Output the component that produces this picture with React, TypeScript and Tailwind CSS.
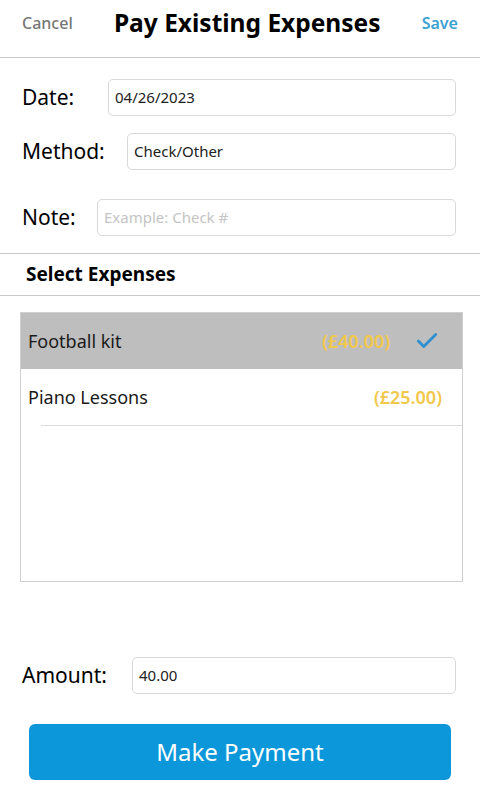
import { Check } from "lucide-react";

const font = { fontFamily: "'Noto Sans', Lato, sans-serif" };

const Field = ({
  label,
  value,
  placeholder,
  gap,
}: {
  label: string;
  value?: string;
  placeholder?: string;
  gap: string;
}) => (
  <div className="flex items-center">
    <span className={`text-[21px] text-black ${gap}`}>{label}</span>
    <div className="flex-1 h-[37px] border border-[#d9d9d9] rounded-[5px] flex items-center px-[6px]">
      {value ? (
        <span className="text-[15px] text-[#222]">{value}</span>
      ) : (
        <span className="text-[15px] text-[#c4c4c4]">{placeholder}</span>
      )}
    </div>
  </div>
);

export default function App() {
  const expenses = [
    { name: "Football kit", amount: "(£40.00)", selected: true },
    { name: "Piano Lessons", amount: "(£25.00)", selected: false },
  ];

  return (
    <div className="w-[480px] h-[801px] bg-white overflow-hidden" style={font}>
      {/* Header */}
      <div className="h-[58px] flex items-start justify-between pt-[5px] px-[22px] border-b border-[#c8c8c8]">
        <span className="text-[16px] font-medium text-[#777] mt-[6px]">Cancel</span>
        <span className="text-[24.5px] font-bold text-black">Pay Existing Expenses</span>
        <span className="text-[16px] font-semibold text-[#3ea2d3] mt-[6px]">Save</span>
      </div>

      {/* Form */}
      <div className="pl-[22px] pr-[24px] pt-[21px] pb-[17px] flex flex-col">
        <Field label="Date:" value="04/26/2023" gap="w-[86px]" />
        <div className="h-[17px]" />
        <Field label="Method:" value="Check/Other" gap="w-[105px]" />
        <div className="h-[29px]" />
        <Field label="Note:" placeholder="Example: Check #" gap="w-[75px]" />
      </div>

      {/* Section header */}
      <div className="h-[43px] border-y border-[#c8c8c8] flex items-center px-[26px]">
        <span className="text-[19px] font-bold text-black">Select Expenses</span>
      </div>

      {/* List */}
      <div className="ml-[20px] mr-[17px] mt-[16px] h-[270px] border border-[#cfcfcf]">
        {expenses.map((e) => (
          <div
            key={e.name}
            className={`h-[56px] flex items-center pl-[7px] ${
              e.selected ? "bg-[#bebebe] pr-[22px]" : "bg-white pr-[20px]"
            }`}
          >
            <span className="flex-1 text-[18px] text-[#1a1a1a]">{e.name}</span>
            <span className="text-[18px] font-semibold text-[#f2c84b]">{e.amount}</span>
            {e.selected && (
              <Check className="ml-[24px] w-[26px] h-[26px] text-[#2f8fd0]" strokeWidth={2.6} />
            )}
          </div>
        ))}
        <div className="ml-[20px] border-t border-[#dcdcdc]" />
      </div>

      {/* Amount */}
      <div className="pl-[22px] pr-[24px] mt-[75px]">
        <Field label="Amount:" value="40.00" gap="w-[110px]" />
      </div>

      {/* Button */}
      <div className="px-[29px] mt-[30px]">
        <button className="w-full h-[56px] rounded-[6px] bg-[#0b97d9] text-white text-[24px]">
          Make Payment
        </button>
      </div>
    </div>
  );
}
